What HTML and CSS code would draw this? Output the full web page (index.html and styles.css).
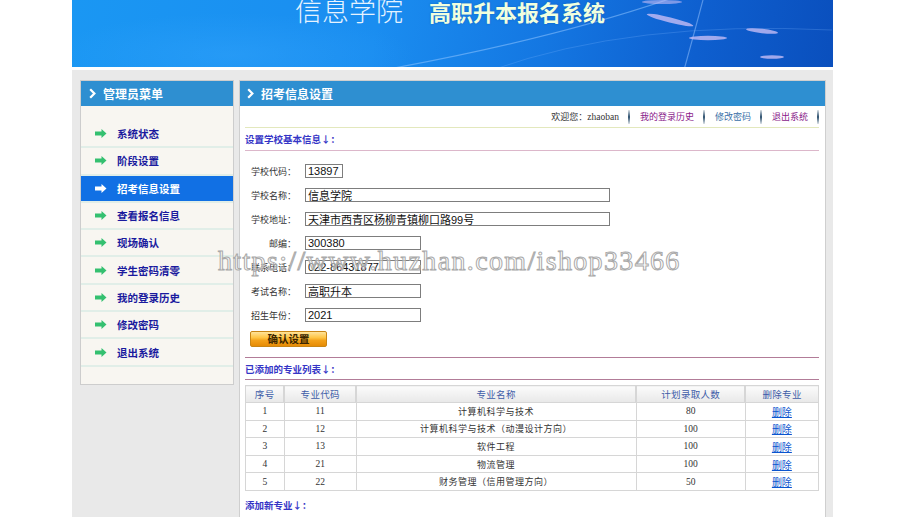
FILE: index.html
```html
<!DOCTYPE html>
<html lang="zh-CN">
<head>
<meta charset="utf-8">
<title>信息学院 高职升本报名系统</title>
<link rel="stylesheet" href="styles.css">
</head>
<body>
<div class="page">
  <div class="banner">
    <svg class="banner-deco" viewBox="0 0 761 67" width="761" height="67" aria-hidden="true">
      <path d="M300 72 Q 480 40 606 -4" fill="none" stroke="#8fc4ff" stroke-opacity="0.55" stroke-width="1.2"/>
      <path d="M612 70 Q 622 34 632 -4" fill="none" stroke="#9cc8ff" stroke-opacity="0.5" stroke-width="1.2"/>
      <path d="M420 70 Q 560 20 760 30" fill="none" stroke="#7fb8ff" stroke-opacity="0.25" stroke-width="1"/>
      <ellipse cx="598" cy="20" rx="24" ry="2.6" transform="rotate(14 598 20)" fill="#c6bdf5" fill-opacity="0.8"/>
      <ellipse cx="636" cy="38" rx="19" ry="2.2" fill="#c6bdf5" fill-opacity="0.8"/>
      <ellipse cx="690" cy="31" rx="16" ry="2.2" transform="rotate(6 690 31)" fill="#c6bdf5" fill-opacity="0.8"/>
      <ellipse cx="700" cy="57" rx="12" ry="1.8" fill="#c6bdf5" fill-opacity="0.8"/>
      <ellipse cx="590" cy="2" rx="20" ry="2" fill="#c6bdf5" fill-opacity="0.6"/>
    </svg>
    <div class="banner-title">
      <span class="t1">信息学院</span>
      <span class="t2">高职升本报名系统</span>
    </div>
  </div>

  <div class="main">
    <aside class="side">
      <div class="ph ph-side">
        <svg class="chev" width="7" height="11" viewBox="0 0 7 11"><path d="M1.2 1.2 L5.4 5.5 L1.2 9.8" fill="none" stroke="#fff" stroke-width="2.2"/></svg>
        <span>管理员菜单</span>
      </div>
      <ul class="menu">
        <li><svg class="arr" width="12" height="9" viewBox="0 0 12 9"><path d="M0 2.6 H6.5 V0 L11.5 4.5 L6.5 9 V6.4 H0 Z"/></svg><a href="#">系统状态</a></li>
        <li><svg class="arr" width="12" height="9" viewBox="0 0 12 9"><path d="M0 2.6 H6.5 V0 L11.5 4.5 L6.5 9 V6.4 H0 Z"/></svg><a href="#">阶段设置</a></li>
        <li class="active"><svg class="arr" width="12" height="9" viewBox="0 0 12 9"><path d="M0 2.6 H6.5 V0 L11.5 4.5 L6.5 9 V6.4 H0 Z"/></svg><a href="#">招考信息设置</a></li>
        <li><svg class="arr" width="12" height="9" viewBox="0 0 12 9"><path d="M0 2.6 H6.5 V0 L11.5 4.5 L6.5 9 V6.4 H0 Z"/></svg><a href="#">查看报名信息</a></li>
        <li><svg class="arr" width="12" height="9" viewBox="0 0 12 9"><path d="M0 2.6 H6.5 V0 L11.5 4.5 L6.5 9 V6.4 H0 Z"/></svg><a href="#">现场确认</a></li>
        <li><svg class="arr" width="12" height="9" viewBox="0 0 12 9"><path d="M0 2.6 H6.5 V0 L11.5 4.5 L6.5 9 V6.4 H0 Z"/></svg><a href="#">学生密码清零</a></li>
        <li><svg class="arr" width="12" height="9" viewBox="0 0 12 9"><path d="M0 2.6 H6.5 V0 L11.5 4.5 L6.5 9 V6.4 H0 Z"/></svg><a href="#">我的登录历史</a></li>
        <li><svg class="arr" width="12" height="9" viewBox="0 0 12 9"><path d="M0 2.6 H6.5 V0 L11.5 4.5 L6.5 9 V6.4 H0 Z"/></svg><a href="#">修改密码</a></li>
        <li><svg class="arr" width="12" height="9" viewBox="0 0 12 9"><path d="M0 2.6 H6.5 V0 L11.5 4.5 L6.5 9 V6.4 H0 Z"/></svg><a href="#">退出系统</a></li>
      </ul>
    </aside>

    <section class="content">
      <div class="ph ph-main">
        <svg class="chev" width="7" height="11" viewBox="0 0 7 11"><path d="M1.2 1.2 L5.4 5.5 L1.2 9.8" fill="none" stroke="#fff" stroke-width="2.2"/></svg>
        <span>招考信息设置</span>
      </div>
      <div class="cbody">
        <div class="topbar">
          <span class="welcome">欢迎您：<span class="user">zhaoban</span></span><i class="sep"></i>
          <a href="#" class="lnk-purple">我的登录历史</a><i class="sep"></i>
          <a href="#" class="lnk-blue">修改密码</a><i class="sep"></i>
          <a href="#" class="lnk-purple">退出系统</a><i class="sep last"></i>
        </div>

        <div class="sec sec-first">设置学校基本信息↓：</div>

        <div class="form">
          <div class="row"><label>学校代码：</label><input class="w-code" type="text" value="13897" readonly></div>
          <div class="row"><label>学校名称：</label><input class="w-long" type="text" value="信息学院" readonly></div>
          <div class="row"><label>学校地址：</label><input class="w-long" type="text" value="天津市西青区杨柳青镇柳口路99号" readonly></div>
          <div class="row"><label>邮编：</label><input class="w-mid" type="text" value="300380" readonly></div>
          <div class="row"><label>联系电话：</label><input class="w-mid" type="text" value="022-86431877" readonly></div>
          <div class="row"><label>考试名称：</label><input class="w-mid" type="text" value="高职升本" readonly></div>
          <div class="row"><label>招生年份：</label><input class="w-mid" type="text" value="2021" readonly></div>
        </div>
        <button class="btn" type="button">确认设置</button>

        <div class="sec sec-list">已添加的专业列表↓：</div>

        <table class="tbl">
          <thead>
            <tr><th class="c1">序号</th><th class="c2">专业代码</th><th class="c3">专业名称</th><th class="c4">计划录取人数</th><th class="c5">删除专业</th></tr>
          </thead>
          <tbody>
            <tr><td>1</td><td>11</td><td class="name">计算机科学与技术</td><td>80</td><td><a href="#" class="del">删除</a></td></tr>
            <tr><td>2</td><td>12</td><td class="name">计算机科学与技术（动漫设计方向）</td><td>100</td><td><a href="#" class="del">删除</a></td></tr>
            <tr><td>3</td><td>13</td><td class="name">软件工程</td><td>100</td><td><a href="#" class="del">删除</a></td></tr>
            <tr><td>4</td><td>21</td><td class="name">物流管理</td><td>100</td><td><a href="#" class="del">删除</a></td></tr>
            <tr><td>5</td><td>22</td><td class="name">财务管理（信用管理方向）</td><td>50</td><td><a href="#" class="del">删除</a></td></tr>
          </tbody>
        </table>

        <div class="sec sec-add">添加新专业↓：</div>
      </div>
    </section>
  </div>
</div>
<div class="watermark">https://www.huzhan.com/ishop33466</div>
</body>
</html>
```

FILE: styles.css
```css
html, body {
  margin: 0;
  padding: 0;
  background: #ffffff;
  font-family: "Noto Sans CJK SC", "Noto Sans", sans-serif;
  overflow: hidden;
}

.page {
  width: 761px;
  margin-left: 72px;
}

/* ---------- banner ---------- */
.banner {
  position: relative;
  height: 67px;
  overflow: hidden;
  background:
    radial-gradient(ellipse 260px 60px at 160px 55px, rgba(60, 170, 255, 0.35), rgba(60, 170, 255, 0) 70%),
    linear-gradient(100deg, #1a97f3 0%, #1a8df0 40%, #1477e2 62%, #0e5fcf 82%, #0a4fbd 100%);
}

.banner-deco {
  position: absolute;
  left: 0;
  top: 0;
}

.banner-title {
  position: relative;
  display: flex;
  align-items: baseline;
  padding-left: 223px;
  margin-top: -4px;
  line-height: 1;
  white-space: nowrap;
}

.t1 {
  font-size: 27px;
  font-weight: 300;
  color: #e6f3ff;
}

.t2 {
  font-size: 22px;
  font-weight: 700;
  color: #f0ffde;
  margin-left: 26px;
  text-shadow: 0 0 2px rgba(0, 60, 140, 0.4);
}

/* ---------- main area ---------- */
.main {
  margin-top: 3px;
  height: 444px;
  background: #e9e9e9;
  display: flex;
  align-items: flex-start;
  gap: 5px;
  padding: 10px 7px 0 8px;
  overflow: hidden;
}

.ph {
  height: 25px;
  background: #2e8fd1;
  color: #ffffff;
  font-size: 12px;
  font-weight: 700;
  display: flex;
  align-items: center;
  white-space: nowrap;
}

.ph-side {
  padding-left: 8px;
  gap: 7px;
}

.ph-main {
  padding-left: 7px;
  gap: 7px;
}

.chev {
  display: block;
  flex: none;
}

/* ---------- side menu ---------- */
.side {
  width: 152px;
  flex: none;
  border: 1px solid #cdcdcd;
  background: #f8f6f1;
}

.menu {
  list-style: none;
  margin: 0;
  padding: 15px 0 17px;
}

.menu li {
  height: 25.3px;
  border-bottom: 2px solid #e1eee8;
  display: flex;
  align-items: center;
  padding-left: 14px;
  gap: 10px;
}

.menu li .arr {
  display: block;
  flex: none;
  fill: #34c070;
}

.menu li a {
  font-size: 10.5px;
  font-weight: 700;
  color: #1a1a9e;
  text-decoration: none;
  white-space: nowrap;
}

.menu li.active {
  background: #1170e4;
}

.menu li.active .arr {
  fill: #ffffff;
}

.menu li.active a {
  color: #ffffff;
}

/* ---------- content ---------- */
.content {
  flex: 1;
  align-self: stretch;
  border: 1px solid #cfcfcf;
  background: #ffffff;
}

.cbody {
  padding: 0 6px 0 5px;
}

.topbar {
  height: 21px;
  display: flex;
  justify-content: flex-end;
  align-items: center;
  border-bottom: 1px solid #e3e8bd;
  font-size: 9px;
  white-space: nowrap;
}

.topbar a {
  text-decoration: none;
}

.welcome {
  color: #333333;
}

.user {
  font-family: "Liberation Serif", serif;
  font-size: 9.5px;
}

.lnk-purple {
  color: #8a1a8a;
}

.lnk-blue {
  color: #3a6fa8;
}

.sep {
  display: block;
  width: 2px;
  height: 14px;
  margin: 0 10px 0 9px;
  background: linear-gradient(to bottom, rgba(40, 80, 110, 0.15), #2c4f6e 50%, rgba(40, 80, 110, 0.15));
}

.sep.last {
  margin-right: 0;
}

.sec {
  height: 21px;
  display: flex;
  align-items: center;
  font-size: 9.5px;
  font-weight: 700;
  color: #3535c6;
  white-space: nowrap;
}

.sec-first {
  height: 22px;
  border-bottom: 1px solid #dcb7ca;
}

.sec-list {
  margin-top: 10px;
  border-top: 1px solid #b27c98;
  border-bottom: 1px solid #b27c98;
}

.sec-add {
  margin-top: 4px;
}

/* ---------- form ---------- */
.form {
  padding-top: 8px;
}

.row {
  height: 24px;
  display: flex;
  align-items: center;
}

.row label {
  width: 45px;
  margin-left: 6px;
  margin-right: 9px;
  text-align: right;
  font-size: 9px;
  color: #333333;
  white-space: nowrap;
}

.row input {
  box-sizing: border-box;
  height: 14px;
  padding: 0 2px;
  margin: 0;
  border: 1px solid #7d7d7d;
  border-radius: 0;
  background: #ffffff;
  color: #111111;
  font-family: "Liberation Sans", "Noto Sans CJK SC", sans-serif;
  font-size: 11px;
  line-height: 12px;
  outline: none;
}

.w-code { width: 38px; }
.w-long { width: 305px; }
.w-mid { width: 116px; }

.btn {
  display: block;
  box-sizing: border-box;
  width: 77px;
  height: 16px;
  margin: 4px 0 0 5px;
  padding: 0;
  border: 1px solid #c98514;
  border-radius: 2px;
  background: linear-gradient(to bottom, #ffe39a 0%, #ffc545 40%, #f3a11a 60%, #e68b05 100%);
  color: #3a2500;
  font-family: "Noto Sans CJK SC", sans-serif;
  font-size: 10.5px;
  font-weight: 700;
  line-height: 14px;
  cursor: pointer;
}

/* ---------- table ---------- */
.tbl {
  width: 574px;
  margin-top: 5px;
  border-collapse: collapse;
  border: 1px solid #d3d3d3;
  table-layout: fixed;
}

.tbl th {
  height: 16px;
  padding: 0;
  border: 1px solid #d6d6d6;
  border-left-width: 2px;
  background: linear-gradient(to bottom, #fbfbfb, #e8e8e8);
  color: #3d5ca8;
  font-size: 9.5px;
  font-weight: 400;
  letter-spacing: 0.3px;
}

.tbl th.c1 { width: 6.62%; border-left-width: 1px; }
.tbl th.c2 { width: 12.37%; }
.tbl th.c3 { width: 49.3%; }
.tbl th.c4 { width: 18.99%; }
.tbl th.c5 { width: 12.72%; }

.tbl td {
  height: 16.6px;
  padding: 0;
  border: 1px solid #d6d6d6;
  text-align: center;
  color: #333333;
  font-family: "Liberation Serif", "Noto Sans CJK SC", serif;
  font-size: 9.5px;
  white-space: nowrap;
}

.tbl td.name {
  font-family: "Noto Sans CJK SC", sans-serif;
  font-size: 9px;
  letter-spacing: 0.5px;
}

.del {
  font-family: "Noto Sans CJK SC", sans-serif;
  font-size: 10px;
  color: #0b55cf;
  text-decoration: underline;
}

/* ---------- watermark overlay ---------- */
.watermark {
  position: absolute;
  left: 218px;
  top: 247px;
  font-family: "Liberation Serif", serif;
  font-size: 28px;
  line-height: 28px;
  letter-spacing: 1.35px;
  color: rgba(255, 255, 255, 0.45);
  -webkit-text-stroke: 1px #a9a9a9;
  white-space: nowrap;
  pointer-events: none;
  z-index: 10;
}
```
